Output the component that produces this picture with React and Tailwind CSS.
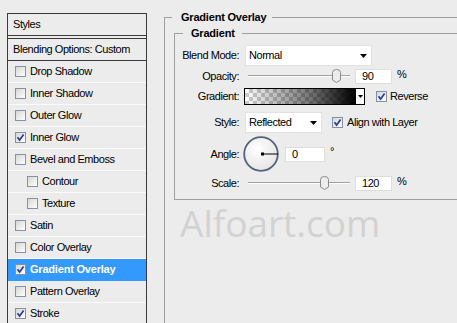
import React from "react";

const effects = [
  { name: "Drop Shadow" },
  { name: "Inner Shadow" },
  { name: "Outer Glow" },
  { name: "Inner Glow", checked: true },
  { name: "Bevel and Emboss" },
  { name: "Contour", sub: true },
  { name: "Texture", sub: true },
  { name: "Satin" },
  { name: "Color Overlay" },
  { name: "Gradient Overlay", checked: true, active: true },
  { name: "Pattern Overlay" },
  { name: "Stroke", checked: true },
];

function Check({ checked }) {
  return (
    <span className="w-[11px] h-[11px] shrink-0 border border-[#8591a8] bg-[linear-gradient(135deg,#d6d6d2,#ffffff)] flex items-center justify-center">
      {checked && (
        <svg width="9" height="9" viewBox="0 0 9 9">
          <path d="M1.5 4.2 L3.6 7 L7.6 1.4" fill="none" stroke="#2a3f91" strokeWidth="1.7" />
        </svg>
      )}
    </span>
  );
}

function Arrow() {
  return (
    <svg width="7" height="4" viewBox="0 0 7 4" className="shrink-0">
      <path d="M0 0 H7 L3.5 4 Z" fill="#000" />
    </svg>
  );
}

function Slider({ thumb }) {
  return (
    <div className="relative w-[102px] h-[15px] ml-[3px]">
      <div className="absolute left-0 right-0 top-[6px] h-[2px] border-t border-[#a3a3a3] border-b border-b-white" />
      <svg width="9" height="14" viewBox="0 0 9 14" className={`absolute top-0 ${thumb}`}>
        <path d="M0.5 3.5 Q0.5 0.5 4.5 0.5 Q8.5 0.5 8.5 3.5 V11 L4.5 13.5 L0.5 11 Z" fill="#ececec" stroke="#8a8a8a" />
      </svg>
    </div>
  );
}

function Field({ value, w }) {
  return (
    <div className={`${w} h-[15px] bg-white border border-[#dedede] flex items-center pl-[6px] leading-none`}>
      {value}
    </div>
  );
}

function Row({ label, h, mt, children }) {
  return (
    <div className={`flex items-center ${h} ${mt}`}>
      <div className="w-[64px] text-right leading-none">{label}</div>
      <div className="ml-[6px] flex items-center">{children}</div>
    </div>
  );
}

export default function App() {
  return (
    <div className="w-[457px] h-[323px] bg-[#ececec] overflow-hidden flex font-['Liberation_Sans',Arial,sans-serif] text-[11px] tracking-[-0.45px] text-black">
      {/* Styles list */}
      <div className="pl-[7px] pt-[13px] w-[147px] shrink-0">
        <div className="border border-b-0 border-[#3a3a3a] h-[320px]">
          <div className="h-[22px] flex items-center pl-[5px] border-b border-[#3a3a3a]">Styles</div>
          <div className="h-[2px]" />
          <div className="h-[23px] flex items-center pl-[5px] border-t border-b border-[#3a3a3a]">
            Blending Options: Custom
          </div>
          {effects.map((e) => (
            <div
              key={e.name}
              className={`h-[22px] flex items-center gap-[4px] border-b ${e.sub ? "pl-[19px]" : "pl-[7px]"} ${
                e.active ? "bg-[#3399ff] border-[#3399ff] text-white font-bold tracking-[-0.2px]" : "border-[#fafafa]"
              }`}
            >
              <Check checked={e.checked} />
              <span>{e.name}</span>
            </div>
          ))}
        </div>
      </div>

      {/* Gradient Overlay settings */}
      <div className="flex-1 min-w-0 pl-[17px]">
        <fieldset className="mt-[11px] border-t border-l border-[#a0a0a0] h-[320px]">
          <legend className="ml-[7px] pl-[9px] pr-[6px] font-bold leading-[13px] tracking-[-0.2px]">Gradient Overlay</legend>
          <fieldset className="mt-[3px] ml-[9px] border-t border-l border-b border-[#a0a0a0] pb-[8px]">
            <legend className="ml-[8px] pl-[8px] pr-[7px] font-bold leading-[13px] tracking-[-0.2px]">Gradient</legend>

            <Row label="Blend Mode:" h="h-[21px]" mt="mt-[5px]">
              <div className="w-[127px] h-[21px] bg-white border border-[#e2e2e2] flex items-center justify-between pl-[3px] pr-[4px]">
                <span>Normal</span>
                <Arrow />
              </div>
            </Row>

            <Row label="Opacity:" h="h-[21px]" mt="">
              <Slider thumb="left-[84px]" />
              <div className="ml-[5px]">
                <Field value="90" w="w-[37px]" />
              </div>
              <span className="ml-[5px] -mt-[4px]">%</span>
            </Row>

            <Row label="Gradient:" h="h-[17px]" mt="mt-[1px]">
              <div className="-ml-[1px] h-[17px] flex border border-black">
                <div className="w-[110px] h-full bg-[repeating-conic-gradient(#cdcdcd_0%_25%,#ffffff_0%_50%)] bg-[length:8px_8px]">
                  <div className="w-full h-full bg-[linear-gradient(to_right,rgba(0,0,0,0),rgba(0,0,0,0.55)_60%,#000)]" />
                </div>
                <div className="w-[9px] h-full bg-white border-l border-black flex items-center justify-center">
                  <svg width="5" height="3" viewBox="0 0 5 3">
                    <path d="M0 0 H5 L2.5 3 Z" fill="#000" />
                  </svg>
                </div>
              </div>
              <div className="ml-[11px] flex items-center gap-[3px]">
                <Check checked />
                <span>Reverse</span>
              </div>
            </Row>

            <Row label="Style:" h="h-[21px]" mt="mt-[7px]">
              <div className="w-[77px] h-[21px] bg-white border border-[#e2e2e2] flex items-center justify-between pl-[3px] pr-[4px]">
                <span>Reflected</span>
                <Arrow />
              </div>
              <div className="ml-[10px] flex items-center gap-[4px]">
                <Check checked />
                <span>Align with Layer</span>
              </div>
            </Row>

            <Row label="Angle:" h="h-[36px]" mt="mt-[3px]">
              <svg width="36" height="36" viewBox="0 0 36 36" className="-ml-[2px]">
                <defs>
                  <radialGradient id="dial" cx="0.4" cy="0.35" r="0.7">
                    <stop offset="0" stopColor="#ffffff" />
                    <stop offset="1" stopColor="#e4e4e4" />
                  </radialGradient>
                </defs>
                <circle cx="18" cy="18" r="16.8" fill="url(#dial)" stroke="#56617e" strokeWidth="1.8" />
                <line x1="19" y1="18" x2="35" y2="18" stroke="#000" strokeWidth="1" />
                <rect x="18" y="16.5" width="3" height="3" fill="#000" />
              </svg>
              <div className="ml-[6px]">
                <Field value="0" w="w-[40px]" />
              </div>
              <span className="ml-[5px] -mt-[6px]">°</span>
            </Row>

            <Row label="Scale:" h="h-[15px]" mt="mt-[4px]">
              <Slider thumb="left-[72px]" />
              <div className="ml-[5px]">
                <Field value="120" w="w-[37px]" />
              </div>
              <span className="ml-[5px] -mt-[4px]">%</span>
            </Row>
          </fieldset>

          <div className="mt-[4px] ml-[15px] font-['Open_Sans',sans-serif] text-[37px] leading-none tracking-normal text-[#d2d2d2]">
            Alfoart.com
          </div>
        </fieldset>
      </div>
    </div>
  );
}
